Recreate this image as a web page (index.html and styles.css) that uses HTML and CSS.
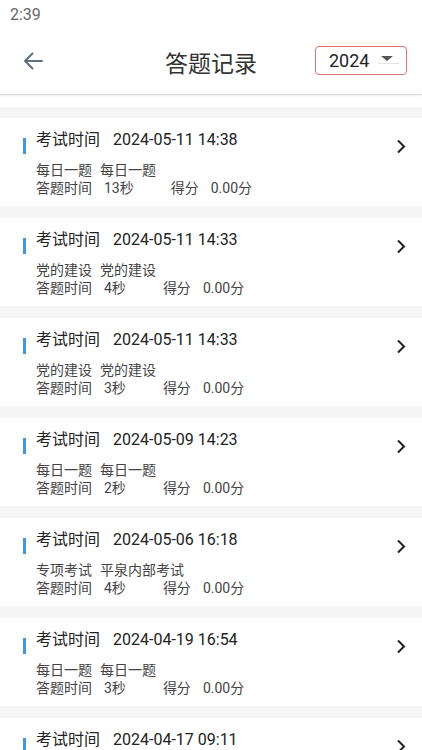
FILE: index.html
```html
<!DOCTYPE html>
<html lang="zh-CN">

<head>
    <meta charset="UTF-8">
    <meta name="viewport" content="width=device-width, initial-scale=1.0">
    <title>答题记录</title>
    <link rel="stylesheet" href="styles.css">
</head>

<body>

    <div class="status-bar">2:39</div>

    <div class="header">
        <div class="back">
            <svg width="20" height="18" viewBox="0 0 20 18">
                <path d="M19 9H2.5M9.5 1.5L2 9l7.5 7.5" fill="none" stroke="#5d7282" stroke-width="2" stroke-linecap="round" stroke-linejoin="round"/>
            </svg>
        </div>
        <div class="title">答题记录</div>
        <div class="year-select">
            <span class="year">2024</span>
            <span class="caret"></span>
        </div>
    </div>

    <div class="spacer"></div>

    <!-- Record list -->
    <div class="record-list">
        <div class="record">
            <div class="record-body">
                <div class="record-title"><span class="mark"></span><span class="label">考试时间</span><span>2024-05-11 14:38</span></div>
                <div class="record-line"><span class="name">每日一题</span><span>每日一题</span></div>
                <div class="record-line"><span class="label-s">答题时间</span><span class="secs">13秒</span><span class="label-s">得分</span><span>0.00分</span></div>
            </div>
            <div class="chevron"><svg width="10" height="15" viewBox="0 0 10 15"><path d="M2 1.5l6 6-6 6" fill="none" stroke="#222" stroke-width="2"/></svg></div>
        </div>

        <div class="record">
            <div class="record-body">
                <div class="record-title"><span class="mark"></span><span class="label">考试时间</span><span>2024-05-11 14:33</span></div>
                <div class="record-line"><span class="name">党的建设</span><span>党的建设</span></div>
                <div class="record-line"><span class="label-s">答题时间</span><span class="secs">4秒</span><span class="label-s">得分</span><span>0.00分</span></div>
            </div>
            <div class="chevron"><svg width="10" height="15" viewBox="0 0 10 15"><path d="M2 1.5l6 6-6 6" fill="none" stroke="#222" stroke-width="2"/></svg></div>
        </div>

        <div class="record">
            <div class="record-body">
                <div class="record-title"><span class="mark"></span><span class="label">考试时间</span><span>2024-05-11 14:33</span></div>
                <div class="record-line"><span class="name">党的建设</span><span>党的建设</span></div>
                <div class="record-line"><span class="label-s">答题时间</span><span class="secs">3秒</span><span class="label-s">得分</span><span>0.00分</span></div>
            </div>
            <div class="chevron"><svg width="10" height="15" viewBox="0 0 10 15"><path d="M2 1.5l6 6-6 6" fill="none" stroke="#222" stroke-width="2"/></svg></div>
        </div>

        <div class="record">
            <div class="record-body">
                <div class="record-title"><span class="mark"></span><span class="label">考试时间</span><span>2024-05-09 14:23</span></div>
                <div class="record-line"><span class="name">每日一题</span><span>每日一题</span></div>
                <div class="record-line"><span class="label-s">答题时间</span><span class="secs">2秒</span><span class="label-s">得分</span><span>0.00分</span></div>
            </div>
            <div class="chevron"><svg width="10" height="15" viewBox="0 0 10 15"><path d="M2 1.5l6 6-6 6" fill="none" stroke="#222" stroke-width="2"/></svg></div>
        </div>

        <div class="record">
            <div class="record-body">
                <div class="record-title"><span class="mark"></span><span class="label">考试时间</span><span>2024-05-06 16:18</span></div>
                <div class="record-line"><span class="name">专项考试</span><span>平泉内部考试</span></div>
                <div class="record-line"><span class="label-s">答题时间</span><span class="secs">4秒</span><span class="label-s">得分</span><span>0.00分</span></div>
            </div>
            <div class="chevron"><svg width="10" height="15" viewBox="0 0 10 15"><path d="M2 1.5l6 6-6 6" fill="none" stroke="#222" stroke-width="2"/></svg></div>
        </div>

        <div class="record">
            <div class="record-body">
                <div class="record-title"><span class="mark"></span><span class="label">考试时间</span><span>2024-04-19 16:54</span></div>
                <div class="record-line"><span class="name">每日一题</span><span>每日一题</span></div>
                <div class="record-line"><span class="label-s">答题时间</span><span class="secs">3秒</span><span class="label-s">得分</span><span>0.00分</span></div>
            </div>
            <div class="chevron"><svg width="10" height="15" viewBox="0 0 10 15"><path d="M2 1.5l6 6-6 6" fill="none" stroke="#222" stroke-width="2"/></svg></div>
        </div>

        <div class="record">
            <div class="record-body">
                <div class="record-title"><span class="mark"></span><span class="label">考试时间</span><span>2024-04-17 09:11</span></div>
                <div class="record-line"><span class="name">每日一题</span><span>每日一题</span></div>
                <div class="record-line"><span class="label-s">答题时间</span><span class="secs">5秒</span><span class="label-s">得分</span><span>0.00分</span></div>
            </div>
            <div class="chevron"><svg width="10" height="15" viewBox="0 0 10 15"><path d="M2 1.5l6 6-6 6" fill="none" stroke="#222" stroke-width="2"/></svg></div>
        </div>
    </div>

</body>

</html>
```

FILE: styles.css
```css
body {
    font-family: Roboto, "Noto Sans CJK SC", sans-serif;
    margin: 0;
    height: 750px;
    overflow: hidden;
    background: #fff;
}

.status-bar {
    height: 30px;
    line-height: 30px;
    padding-left: 10px;
    font-size: 16px;
    color: #666;
}

.header {
    height: 64px;
    display: grid;
    grid-template-columns: 1fr auto 1fr;
    align-items: center;
    border-bottom: 1px solid #d9d9d9;
    box-shadow: 0 1px 2px rgba(0, 0, 0, 0.06);
}

.back {
    padding-left: 23px;
    display: flex;
    align-items: center;
    margin-top: -2px;
}

.title {
    font-size: 23px;
    color: #333;
}

.year-select {
    justify-self: end;
    margin-right: 15px;
    margin-top: -4px;
    width: 90px;
    height: 27px;
    border: 1px solid #e07272;
    border-radius: 4px;
    display: flex;
    align-items: center;
    box-sizing: content-box;
}

.year {
    font-size: 18px;
    color: #222;
    margin-left: 13px;
}

.caret {
    margin-left: 9px;
    width: 21px;
    height: 7px;
    position: relative;
    border-bottom: 1px solid #e4e4e4;
}

.caret::before {
    content: "";
    position: absolute;
    left: 3px;
    top: 0;
    border-left: 6px solid transparent;
    border-right: 6px solid transparent;
    border-top: 5px solid #555;
}

.spacer {
    height: 12px;
}

.record-list {
    background: #f5f5f5;
    padding-top: 11px;
}

.record {
    background: #fff;
    height: 88px;
    margin-bottom: 12px;
    display: flex;
    padding-left: 23px;
    padding-right: 16px;
}

.record-body {
    flex: 1;
    padding-top: 11px;
}

.record-title {
    display: flex;
    height: 22px;
    line-height: 22px;
    font-size: 16px;
    color: #222;
}

.mark {
    width: 3px;
    height: 16px;
    margin-top: 9px;
    margin-right: 10px;
    background: #3a9be0;
    flex-shrink: 0;
}

.label {
    margin-right: 13px;
}

.record-line {
    font-size: 14px;
    line-height: 18px;
    color: #444;
    padding-left: 13px;
}

.record-title + .record-line {
    margin-top: 10px;
}

.name {
    margin-right: 8px;
}

.label-s {
    margin-right: 12px;
}

.secs {
    margin-right: 37px;
}

.chevron {
    padding-top: 21px;
}
```
